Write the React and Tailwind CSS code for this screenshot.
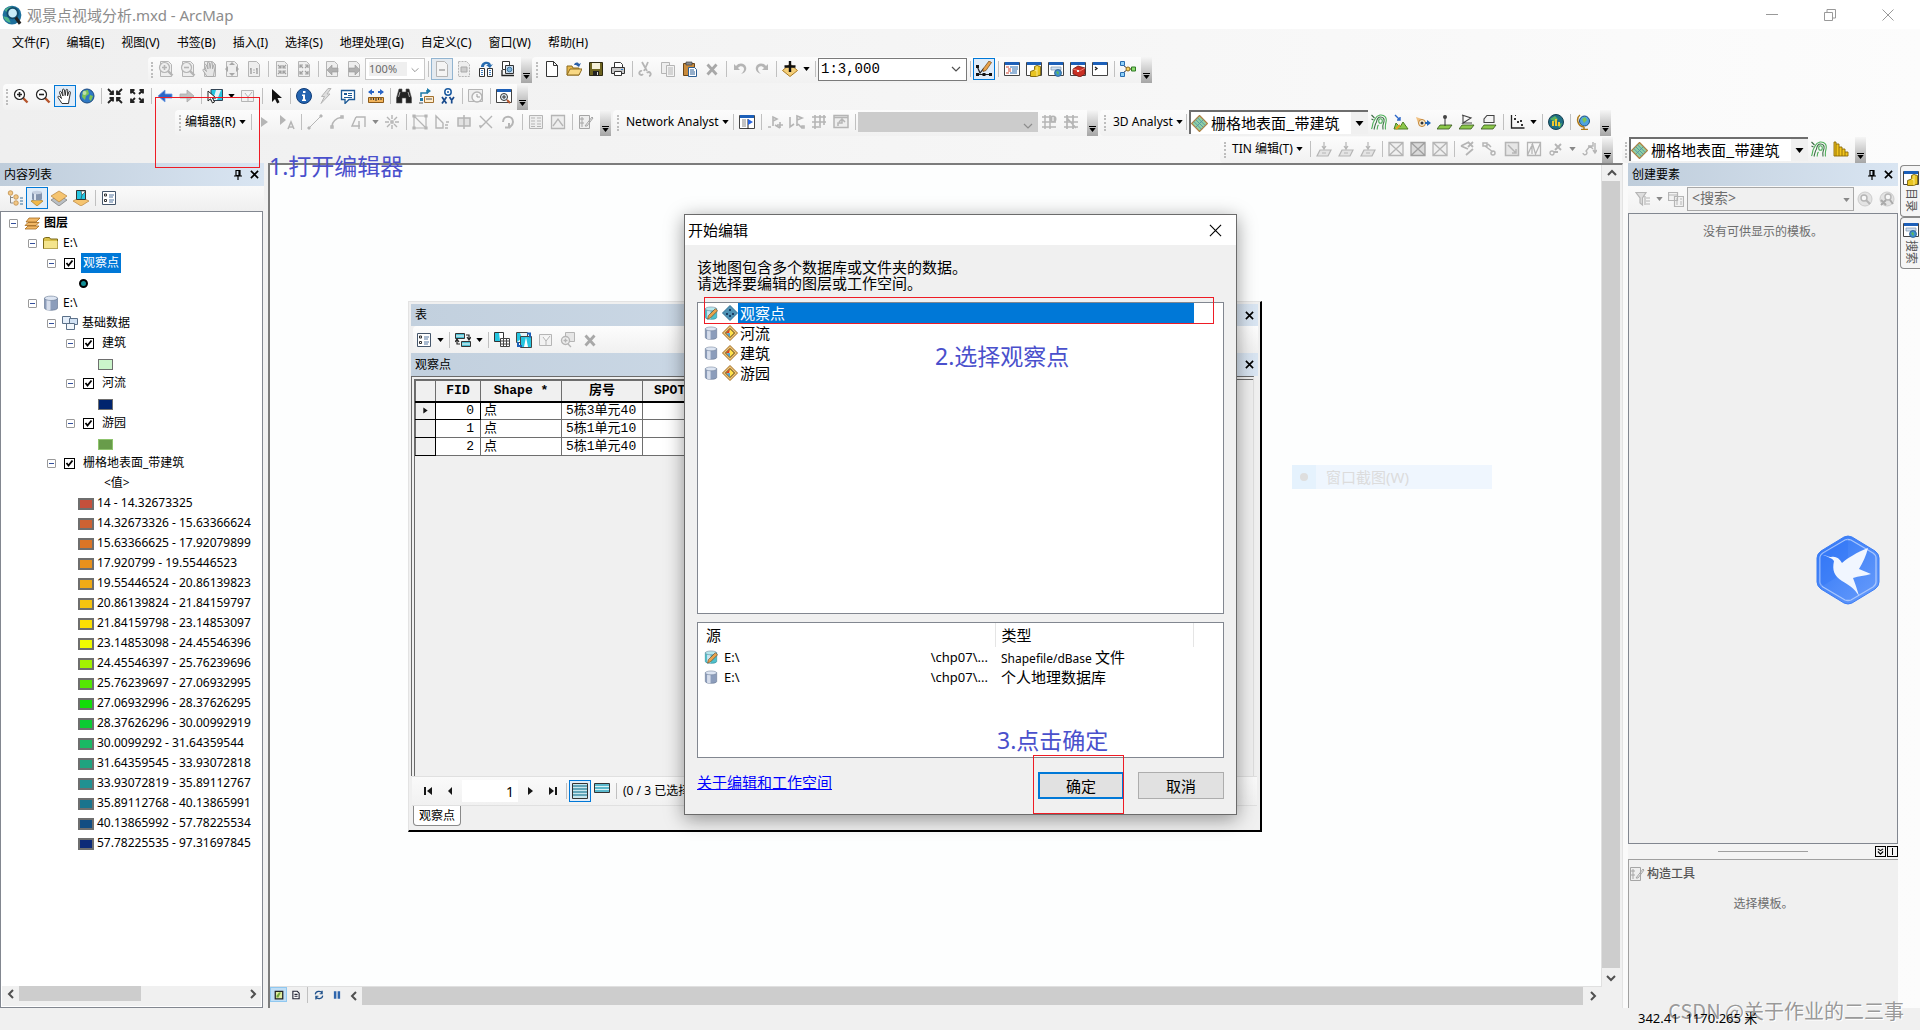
import { useState } from 'react';
import clsx from 'clsx';

const UI_FONT = "font-['Noto_Sans','Noto_Sans_CJK_SC',sans-serif]";
const SONG_FONT = "font-['Noto_Sans_CJK_SC',sans-serif]";
const MONO_FONT = "font-['Liberation_Mono','Noto_Sans_CJK_SC',monospace]";

const G = '#b5b5b5';
const page = 'M2.5.5h8l3 3v12h-11z';

// --- Shapes shared by several icons ---
const Win = ({ children }) => (
  <>
    <path d="M.5 1.5h15v13H.5z" fill="#fff" stroke="#444" />
    <path d="M1 1h14v3H1z" fill="#1c5fb8" />
    {children}
  </>
);
const Cylinder = ({ edit }) => (
  <>
    <path d="M1.5 3v10c0 3 13 3 13 0V3z" fill={edit ? '#4fc0cc' : '#8c9dbb'} stroke={edit ? '#2a8c98' : '#6b7c96'} strokeWidth=".7" />
    <path d="M3.500 5v9.700c1.500.5 2.500.5 4 .5V5z" fill="#e8eef8" opacity=".8" />
    <ellipse cx="8" cy="3.300" rx="6.500" ry="2.200" fill={edit ? '#b5e8ec' : '#dde5f2'} stroke="#6b7c96" strokeWidth=".6" />
    {edit && <path d="M4 15l1-4 8-8 2.500 2.500-8 8z" fill="#e9a24b" stroke="#5f4020" strokeWidth=".7" />}
  </>
);
const Diamond = ({ point }) => (
  <>
    <path d="M8 .5L15.500 8 8 15.500.5 8z" fill={point ? '#4f93b5' : '#f0c476'} stroke={point ? '#2f6f93' : '#a06a1c'} />
    {point ? (
      <path d="M7 4h2v2H7zM4 8h2v2H4zM10 8h2v2h-2zM7 10h2v2H7z" fill="#1c3f66" />
    ) : (
      <>
        <path d="M8 3.500L12.500 8 8 12.500 3.500 8z" fill="#ffe14a" stroke="#3b2a10" strokeWidth=".9" />
        <path d="M8 4L4 8l3 0z" fill="#e03c28" />
        <path d="M4.500 8.500L8 8v4z" fill="#4aa0e0" />
      </>
    )}
  </>
);
const Lens = ({ color = '#222', fill = '#fff', sign }) => (
  <>
    <path d="M10 10l4.500 4.500" stroke={color === G ? G : '#b5542c'} strokeWidth="2.400" />
    <circle cx="6.500" cy="6.500" r="5" fill={fill} stroke={color} strokeWidth="1.200" />
    <path d={sign === '+' ? 'M4 6.500h5M6.500 4v5' : 'M4 6.500h5'} stroke={color} strokeWidth="1.600" />
  </>
);
const Hand = ({ color = '#333', fill = '#fff' }) => (
  <path d="M5 15.500L1 9.500c-.5-1.200.8-1.800 1.700-.8L4.500 10.500 2.500 4.500c-.2-1.300 1.300-1.600 1.800-.5L6 8 5.500 2c0-1.200 1.600-1.300 1.900-.1L8.200 7.500 9 2c.3-1.100 1.700-.9 1.700.3L10.500 8l1.300-4c.5-1 1.900-.6 1.600.6L12 12l-.5 3.500z" fill={fill} stroke={color} />
);
const Contour = () => (
  <>
    <path d="M.5 15C2 12 1 10 3 7s1-5 6-6c5-.5 7 3 6 7-.5 2-1 4-.5 7.500" fill="none" stroke="#4fb05a" strokeWidth="1.100" />
    <path d="M3 15.500C4 12 4 10 5.500 8 6 5 7 3 9.500 3c3 0 4 2 3.500 4.500S11 11 12 15.500M.5 1l3 3M.5 5l2 1" fill="none" stroke="#3c6b45" strokeWidth="1.100" />
    <path d="M6 15.500c1-3 0-3 1.500-4.500" fill="none" stroke="#4fb05a" strokeWidth="1.100" />
    <ellipse cx="9.500" cy="7" rx="1.800" ry="2.300" fill="none" stroke="#4fb05a" strokeWidth="1.100" />
  </>
);
const Cat = () => (
  <Win>
    <path d="M4.500 15.500v-5l4-1.500V5.500L11 4.500l3.500 1v8.500l-4 1.500z" fill="#e8c422" stroke="#7a6208" strokeWidth=".9" />
    <path d="M8.500 9l2.500 1v5M11 5v5" fill="none" stroke="#fff2a0" strokeWidth=".8" />
  </Win>
);
const SearchWin = () => (
  <Win>
    <path d="M3 6h10v3H3z" fill="#cfe0f2" stroke="#7c93ad" strokeWidth=".7" />
    <circle cx="10" cy="12" r="3.500" fill="#3f8fd0" stroke="#1c4f80" strokeWidth=".7" />
    <path d="M8 11l2-1 1 2-1 2z" fill="#5cb85c" />
  </Win>
);
const ListPage = () => (
  <>
    <path d="M1.500 1.500h13v13h-13z" fill="#fff" stroke="#45566b" />
    <path d="M3.500 4h2v2h-2zM3.500 9.500h2v2h-2z" fill="none" stroke="#333" />
    <path d="M8 5h5M8 7h4M8 10h5M8 12h4" stroke="#5577a0" />
  </>
);
const MagBar = ({ d }) => <path d={d} fill="#161616" />;

const ICONS = {
  app: (
    <>
      <circle cx="8" cy="8" r="7.500" fill="#1d6f9c" />
      <path d="M2 4c3-3 6-3 8-2L8 5 4 6zM1 9l4 1 2 4c-3 0-5-2-6-5z" fill="#4fb58a" />
      <circle cx="8.500" cy="6.500" r="4.200" fill="#c9ecf7" stroke="#114a6b" strokeWidth="1.500" />
      <path d="M11 10l3.500 5" stroke="#222" strokeWidth="2.500" />
    </>
  ),
  pZoomIn: <><path d={page} fill="#eee" stroke={G} /><Lens color={G} fill="#eee" sign="+" /></>,
  pZoomOut: <><path d={page} fill="#eee" stroke={G} /><Lens color={G} fill="#eee" sign="-" /></>,
  pPan: <><path d={page} fill="#eee" stroke={G} /><Hand color="#aaa" fill="#e6e6e6" /></>,
  pFull: <><path d={page} fill="#eee" stroke={G} /><path d="M8 1l3 3H5zM8 15l3-3H5zM1 8l3-3v6zM15 8l-3-3v6z" fill="#a8a8a8" /></>,
  pOne: <><path d={page} fill="#eee" stroke={G} /><path d="M5 7v6M4 8h1M11 7v6M10 8h1M8 8.500v1M8 11v1" stroke="#a0a0a0" strokeWidth="1.400" /></>,
  pIn: <><path d={page} fill="#eee" stroke={G} /><path d="M4 7h3V4M9 4v3h3M4 10h3v3M12 10H9v3M4 4l3 3M12 4L9 7M4 13l3-3M12 13l-3-3" stroke="#a0a0a0" strokeWidth="1.200" fill="none" /></>,
  pOut: <><path d={page} fill="#eee" stroke={G} /><path d="M4 7V4h3M9 4h3v3M4 10v3h3M12 10v3H9M4 4l3 3M12 4L9 7M4 13l3-3M12 13l-3-3" stroke="#a0a0a0" strokeWidth="1.200" fill="none" /></>,
  pBack: <><path d={page} fill="#eee" stroke={G} /><path d="M3 9l5-5v3h6v4H8v3z" fill="#b0b0b0" stroke="#999" strokeWidth=".6" /></>,
  pFwd: <><path d={page} fill="#eee" stroke={G} /><path d="M14 9L9 4v3H3v4h6v3z" fill="#b0b0b0" stroke="#999" strokeWidth=".6" /></>,
  pDraft: <><path d={page} fill="#f4f4f4" stroke={G} /><path d="M5 9h6" stroke="#aaa" strokeWidth="1.600" /></>,
  pFocus: <><path d={page} fill="#eee" stroke={G} strokeDasharray="2 1" /><path d="M5 6h6v5H5z" fill="#ccc" stroke="#aaa" /></>,
  layoutSwap: (
    <>
      <path d="M3 6c0-6 9-7 10-2l2-1-3 4-4-3h2c-1-2-4-1-4 2z" fill="#2a6db0" />
      <path d="M1.500 7.500h5v8h-5zM9.500 7.500h5v8h-5z" fill="#fff" stroke="#333" />
      <path d="M3 9.500h2M3 11.500h2M3 13.500h2M11 9.500h2M11 11.500h2M11 13.500h2" stroke="#3f7fc0" />
    </>
  ),
  dataDriven: <><path d="M2.500.5h7v8h-7z" fill="#fff" stroke="#333" /><path d="M5.500 4.500h8v8h-8z" fill="#cde" stroke="#333" /><path d="M2 9v5.500h12" fill="none" stroke="#222" strokeWidth="1.300" /><circle cx="9.500" cy="8.500" r="2.300" fill="#7fb4dc" stroke="#2a5f8c" strokeWidth=".8" /></>,
  newDoc: <path d="M2.500.5h7l4 4v11h-11zM9.500.5v4h4" fill="#fff" stroke="#333" />,
  open: <><path d="M1 14V5h5l1 2h6v7z" fill="#e8b84b" stroke="#8c6a1c" /><path d="M1 14l3-6h12l-3 6z" fill="#f8d884" stroke="#8c6a1c" /><path d="M8 4c1-3 4-3 5-1l2-1-2 4-3-2h2" fill="#2a5fa8" /></>,
  save: <><path d="M1.500 1.500h13v13h-13z" fill="#6e6420" stroke="#2e2a10" /><path d="M4 2h8v6H4z" fill="#f5f0d8" /><path d="M5 10h6v5H5z" fill="#222" /><path d="M9 11h1v3H9z" fill="#ddd" /></>,
  print: <><path d="M4.500 6V1.500h6l2 2V6" fill="#fff" stroke="#333" /><path d="M1.500 6.500h13v6h-13z" fill="#c9c9c9" stroke="#333" /><path d="M4.500 10.500h7v4h-7z" fill="#fff" stroke="#333" /><path d="M11 8h2v1h-2z" fill="#2c7fd0" /></>,
  cut: <path d="M4 1l5 9M10 1L6 10M5 13a2 2 0 1 1-1-3M11 15a2 2 0 1 0-2-3" fill="none" stroke={G} strokeWidth="1.800" />,
  copy: <><path d="M1.500 1.500h8v11h-8z" fill="#eee" stroke={G} /><path d="M6.500 4.500h8v11h-8z" fill="#f3f3f3" stroke={G} /><path d="M8 7h5M8 9h5M8 11h5M8 13h5" stroke={G} /></>,
  paste: <><path d="M1.500 2.500h11v12h-11z" fill="#c98b3c" stroke="#6b4618" /><path d="M4 1h6v3H4z" fill="#888" stroke="#444" strokeWidth=".7" /><path d="M6.500 6.500h6l2 2v7h-8z" fill="#fff" stroke="#2d5f94" /><path d="M8 9h4M8 11h5M8 13h5" stroke="#2d5f94" /></>,
  del: <path d="M3.500 3.500l9 10M12.500 3.500l-9 10" stroke="#a8a8a8" strokeWidth="2.800" />,
  undo: <path d="M2 3v6h6L6 7c2-3 6-2 6 1 0 2-1 3-3 5 4-1 6-4 5-7-1-4-7-5-10-1z" fill={G} />,
  redo: <path d="M14 3v6H8l2-2C8 4 4 5 4 8c0 2 1 3 3 5-4-1-6-4-5-7 1-4 7-5 10-1z" fill={G} />,
  addData: <><path d="M8 3l7.500 6.500L8 15.500.5 9.500z" fill="#f5cf78" stroke="#a97a24" /><path d="M8 0v11M2.500 5.500h11" stroke="#111" strokeWidth="2.400" /></>,
  sketch: <><path d="M1 5l3 7 4-5M2 13.500h12" fill="none" stroke="#222" strokeWidth="1.200" /><path d="M7 8l6-8 2.500 1.500-5.500 8-3 1z" fill="#e9a24b" stroke="#6b4618" strokeWidth=".7" /><path d="M0 4h3v3H0zM0 12h3v3H0zM6.500 12h3v3h-3zM13 12h3v3h-3z" fill="#111" /></>,
  winToc: <Win><path d="M2 6h3M4 8h3M4 10h3M2 12h3" stroke="#d0402c" /><path d="M6 6h8M8 8h6M8 10h5M6 12h7" stroke="#2a6db0" /></Win>,
  winCat: <Cat />,
  winSearch: <SearchWin />,
  winTool: <Win><path d="M3 8l5-3 7 2v6l-5 3-7-3z" fill="#c92f24" stroke="#6b1510" strokeWidth=".8" /><path d="M3 8l7 2 5-3" fill="none" stroke="#f08070" /><path d="M7 9h2v2H7z" fill="#eee" /></Win>,
  winPy: <Win><path d="M3 6l2 1.500L3 9" fill="none" stroke="#222" strokeWidth="1.300" /></Win>,
  model: <><path d="M3 4l5 4M3 12l5-4M9 8h4" stroke="#333" /><path d="M.5.500h4v4h-4zM.5 11.500h4v4h-4z" fill="#8ed0f8" stroke="#2a6db0" /><circle cx="8" cy="8" r="2" fill="#f5d060" stroke="#8c6a1c" /><path d="M11.500 6h4v4h-4z" fill="#8fdc70" stroke="#2f7a24" /></>,
  zoomIn: <Lens sign="+" />,
  zoomOut: <Lens sign="-" />,
  pan: <Hand />,
  globe: <><circle cx="8" cy="8" r="7" fill="#2f79c4" stroke="#1b4a80" /><path d="M4 3l5-1 1 4-3 2-1 4-3-3zM11 7l3 1-2 5-2-2z" fill="#7cc455" /><circle cx="5.500" cy="5" r="2" fill="#fff" opacity=".5" /></>,
  fixIn: <path d="M1 1l5 5M6 2.500V6H2.500M15 1l-5 5M10 2.500V6h3.500M1 15l5-5M2.500 10H6v3.500M15 15l-5-5M13.500 10H10v3.500" fill="none" stroke="#222" strokeWidth="1.800" />,
  fixOut: <path d="M2 2l4 4M2 5.500V2h3.500M14 2l-4 4M10.500 2H14v3.500M2 14l4-4M2 10.500V14h3.500M14 14l-4-4M14 10.500V14h-3.500" fill="none" stroke="#222" strokeWidth="1.800" />,
  back: <path d="M1 8l7-6v4h7v4H8v4z" fill="#2a66c8" stroke="#6c9be0" strokeWidth=".8" />,
  fwd: <path d="M15 8L8 2v4H1v4h7v4z" fill="#c0c0c0" stroke="#aaa" strokeWidth=".8" />,
  selFeat: <><path d="M4 1.500h11.500v11H4z" fill="#25c5e0" stroke="#345" /><path d="M9 2l-3 10h4l4-10z" fill="#e6f4f8" /><path d="M1 3v10l2.500-2.200L5.500 15l2-1-2-4H9z" fill="#fff" stroke="#222" /></>,
  clearSel: <path d="M1.500 2.500h12v11h-12zM5 5l3 4 4-5M8 9v4" fill="#f2f2f2" stroke={G} />,
  pointer: <path d="M4 1v13l3-3 2.200 4.500 2.300-1.200L9.500 10H14z" fill="#111" />,
  info: <><circle cx="8" cy="8" r="7.500" fill="#2464b0" stroke="#0f3c78" /><path d="M7 3h2.500v2H7zM6 6.500h3v5h1V13H6v-1.500h1V8H6z" fill="#fff" /></>,
  bolt: <path d="M10 .5L3.500 8.500h3L3 15.500l9-9.500H9l4-5.500z" fill="#dedede" stroke={G} />,
  popup: <><path d="M1.500 2.500h13v9H9l-4 4v-4H1.500z" fill="#fff" stroke="#1d5a96" strokeWidth="1.300" /><path d="M4 5h3v2H4zM8 5h4v1H8zM8 7h4v1H8zM4 9h8v1H4z" fill="#1d5a96" /></>,
  measure: <><path d="M1 4h5M10 4h5" stroke="#2a66c8" strokeWidth="2" /><path d="M4 1L0 4l4 3zM12 1l4 3-4 3z" fill="#2a66c8" /><path d="M.5 9.500h15v5H.5z" fill="#f2b45c" stroke="#8c5a18" /><path d="M3 10v2M5.500 10v2M8 10v3M10.500 10v2M13 10v2" stroke="#333" /></>,
  find: <><path d="M3 1h3v3h4V1h3l2.500 9v5H10v-5H6v5H.5v-5z" fill="#222" stroke="#555" strokeWidth=".6" /><path d="M4 4L2.500 9M12 4l1.500 5" stroke="#aaa" /></>,
  route: <><path d="M3 9V5h6V2" fill="none" stroke="#1d7aa8" strokeWidth="1.500" /><path d="M9 0l4 3-4 3zM2 10h3v3H2z" fill="#1d7aa8" /><path d="M6.500 8.500h9v6h-9z" fill="#ffeccc" stroke="#a07030" /><path d="M8 11h6M1 15h4" stroke="#555" /></>,
  goXY: <><circle cx="8" cy="4" r="3.200" fill="#fff" stroke="#1a5aa0" strokeWidth="1.500" /><circle cx="8" cy="4" r="1" fill="#1a5aa0" /><path d="M2 9l4.500 6.500M6.500 9L2 15.500M9.500 9l2.200 3.200L14 9M11.700 12v3.500" fill="none" stroke="#17498c" strokeWidth="1.700" /></>,
  time: <><path d="M.5 1.500h14v12H.5z" fill="#eee" stroke={G} /><circle cx="9" cy="9" r="5" fill="#f7f7f7" stroke={G} strokeWidth="1.400" /><path d="M9 6v3h3" fill="none" stroke="#999" /></>,
  viewer: <Win><circle cx="8" cy="9" r="3.500" fill="#e0eefa" stroke="#333" /><path d="M6 9h4M8 7v4" stroke="#333" /><path d="M11 12l3 3" stroke="#b5542c" strokeWidth="2" /></Win>,
  eArrow: <path d="M4 3v10l7-5z" fill={G} />,
  eArrowA: <><path d="M1 1v10l6-5z" fill={G} /><path d="M9 15l3-7 3 7M10 13h4" fill="none" stroke={G} strokeWidth="1.500" /></>,
  eLine: <path d="M3 13L13 3M1 13h2v2H1zM13 1h2v2h-2z" fill={G} stroke={G} />,
  eArc: <path d="M3 12C3 8 7 4 12 3.500M2 12h2v2H2zM12 2h2v2h-2z" fill="none" stroke={G} strokeWidth="1.500" />,
  ePoly: <path d="M5 3h9v10M5 3L1 12h8M8 15V7" fill="none" stroke={G} strokeWidth="1.400" />,
  ePoint: <path d="M8 1v4M8 11v4M1 8h4M11 8h4M3 3l3 3M13 3l-3 3M3 13l3-3M13 13l-3-3M7 7h2v2H7z" fill="none" stroke={G} strokeWidth="1.400" />,
  eReshape: <path d="M2 2h12v12H2zM2 2l12 12M1 1h2v2H1zM13 1h2v2h-2zM1 13h2v2H1zM13 13h2v2h-2z" fill="none" stroke={G} strokeWidth="1.200" />,
  eSplit: <path d="M2 2v12h7V9zM2 2l7 7M11 11h3M11 14h3M12 8h3" fill="none" stroke={G} strokeWidth="1.400" />,
  eCut: <path d="M2 4h12v8H2zM8 1v14" fill="#e2e2e2" stroke={G} strokeWidth="1.500" />,
  eCross: <path d="M2 2l12 12M14 2L2 14M1 12h3" fill="none" stroke={G} strokeWidth="1.400" />,
  eRotate: <path d="M3 8c0-7 10-7 10 0 0 3-2 4-4 6M5 13.500h5M9 9v5" fill="none" stroke={G} strokeWidth="2" />,
  eAttr: <path d="M1.500 1.500h13v13h-13zM3 4h4M9 4h4M3 7h4M9 7h4M3 10h4M9 10h4M3 12.500h4M9 12.500h4" fill="#eee" stroke={G} />,
  eSketchP: <path d="M1.500 1.500h13v13h-13zM3 12l5-7 5 7" fill="#eee" stroke={G} strokeWidth="1.300" />,
  eCreate: <path d="M1.500 1.500h10v13h-10zM3 4h2v2H3zM3 8h2v2H3zM3 12h2M7 12l7-9 1 1-6 8z" fill="#eee" stroke="#a5a5a5" />,
  naWin: <Win><path d="M3 6h4M3 8h4M3 10h4M3 12h4" stroke="#888" /><path d="M9 5v10" stroke="#222" /><path d="M9 5l5 3-5 3z" fill="#2a66e0" /></Win>,
  naAdd: <path d="M1 13h3M6 12V3l4 2-4 2M8 11l5 3M13 8v6M10 11h6" fill="none" stroke={G} strokeWidth="1.600" />,
  naSel: <path d="M1 3v10l4-3M8 12V2l5 2-5 2M9 10l4 4M13 12h2v2h-2z" fill="none" stroke={G} strokeWidth="1.600" />,
  naGrid: <path d="M1 3h14M1 8h14M1 13h9M4 1v14M9 1v11M13 1v10" fill="none" stroke={G} strokeWidth="1.600" />,
  naDir: <path d="M1 1.500h14v12H1zM1 3.500h14M5 12V9h4V6M6 8l3-3 3 3" fill="#eee" stroke={G} strokeWidth="1.500" />,
  naInfo: <><path d="M1 3h9M1 8h14M1 13h14M4 1v14M9 1v14" stroke={G} strokeWidth="1.500" /><circle cx="12" cy="5" r="3.500" fill={G} /><path d="M12 3v4" stroke="#fff" /></>,
  naTool: <path d="M1 3h14M1 8h14M1 13h14M4 1v14M10 1v14M4 4l9 10" fill="none" stroke={G} strokeWidth="1.700" />,
  contour: <Contour />,
  steep: <><path d="M2 1l5 5M7 3v3H4" fill="none" stroke="#2a66c8" strokeWidth="1.400" /><path d="M1 15l2-6 4 4 3-5 5 7z" fill="#8cc84b" stroke="#4e7f22" /><path d="M3 15l4-4" stroke="#e8a020" strokeWidth="2" /></>,
  sight: <><path d="M1 3l6 2-4 4z" fill="#f0c080" /><circle cx="7" cy="9" r="3.500" fill="#f8ecd0" stroke="#c08030" /><circle cx="7" cy="9" r="1.500" fill="#333" /><path d="M10 9h3" stroke="#2266b8" strokeWidth="2" /><path d="M12 6l4 3-4 3z" fill="#2266b8" /></>,
  iPoint: <><path d="M3 11h12l-3 4H0z" fill="#8cc84b" stroke="#33531a" strokeWidth=".8" /><path d="M8 3v9" stroke="#333" /><circle cx="8" cy="3" r="2" fill="#444" /></>,
  iLine: <><path d="M3 11h12l-3 4H0z" fill="#8cc84b" stroke="#33531a" strokeWidth=".8" /><path d="M3 1l9 3-8 5 9 0M4 1v9" fill="none" stroke="#444" strokeWidth="1.100" /></>,
  iPoly: <><path d="M3 11h12l-3 4H0z" fill="#8cc84b" stroke="#33531a" strokeWidth=".8" /><path d="M6 1.500h7v7H3V5z" fill="#f5f5f5" stroke="#444" strokeWidth="1.100" /></>,
  profile: <><path d="M2.500 1v13h13" fill="none" stroke="#222" strokeWidth="1.300" /><path d="M5 4h2v2H5zM8 7h2v2H8zM11 6h2v2h-2zM12 10h2v2h-2zM6 1h1v1H6z" fill="#333" /></>,
  scene: <><circle cx="8" cy="8" r="7.500" fill="#1f6f86" stroke="#153f50" /><path d="M2 5l5-3 3 3-3 3zM9 11l5-2-2 5z" fill="#57b060" /><path d="M4 7h2v5H4zM7 5h2v7H7zM10 8h2v4h-2z" fill="#f0c830" /></>,
  arcGlobe: <><circle cx="8.500" cy="7" r="5" fill="#4ea3e0" stroke="#1c4f80" /><path d="M6 5l3-2 2 3-3 3z" fill="#7cc455" /><path d="M4 1C0 4 1 12 8 13M5 15.500h7M8 13v2" fill="none" stroke="#b07a18" strokeWidth="1.500" /></>,
  tin: <path d="M4 9h11l-3 6H1zM6 12h4M8 1v6M6 5l2 3 2-3" fill="#e4e4e4" stroke={G} strokeWidth="1.200" />,
  tinBox: <path d="M1 1.500h14v13H1zM1 1.500l14 13M15 1.500l-14 13" fill="#f0f0f0" stroke={G} strokeWidth="1.300" />,
  tinBoxD: <path d="M1 1.500h14v13H1zM1 1.500l14 13M15 1.500l-14 13" fill="#dadada" stroke="#a0a0a0" strokeWidth="1.300" />,
  tinDel: <path d="M1 5l8-4M1 5l7 3M8 1l5 5M13 1L8 6M13 8l-7 6" fill="none" stroke={G} strokeWidth="1.800" />,
  tinMove: <path d="M1 2h4v3H1zM3 5l8 6M6 3l3 3M11 10a2 2 0 1 1 0 4 2 2 0 0 1 0-4z" fill="none" stroke={G} strokeWidth="1.500" />,
  tinSwap: <path d="M1.500 1.500h13v13h-13zM4 4l8 8M8 12h4V8" fill="#e6e6e6" stroke={G} strokeWidth="1.500" />,
  tinMod: <path d="M1.500 1.500h13v13h-13zM1.500 14l5-11 3 10 5-11M6 3v10" fill="none" stroke={G} strokeWidth="1.300" />,
  tinX: <><circle cx="4" cy="12" r="2" fill="none" stroke={G} strokeWidth="1.300" /><path d="M7 3l6 6M13 3L7 9M6 11h4" stroke={G} strokeWidth="1.900" /></>,
  tinNode: <path d="M2 12a2 2 0 1 0 3-2L9 5l3 3M7 5h5V1M14 2v9M12 9l2 3 2-3" fill="none" stroke={G} strokeWidth="1.400" />,
  hist: <path d="M1 15V1h2v2h3v3h3v2h3v3h3v4zM3 3v12M6 6v9M9 8v7M12 11v4" fill="#f2c51c" stroke="#8a6a08" strokeWidth=".9" />,
  surface: <><path d="M8 .5L15.500 8 8 15.500.5 8z" fill="#8fd0a4" stroke="#b08040" strokeWidth="1.200" /><path d="M4.200 4.200l7.500 7.500M8 8l3.700-3.700M8 8l-3.700 3.700M6 2.500l7.500 7.500M2.500 6l7.500 7.500" stroke="#4f8fa8" strokeWidth=".8" /></>,
  tocOrder: <><circle cx="3.500" cy="3" r="2.300" fill="#f2c786" stroke="#b7843c" strokeWidth=".7" /><circle cx="9" cy="7" r="2.300" fill="#f2c786" stroke="#b7843c" strokeWidth=".7" /><circle cx="9" cy="13" r="2.300" fill="#f2c786" stroke="#b7843c" strokeWidth=".7" /><path d="M3.500 6v7H6M3.500 7.500H6" fill="none" stroke="#888" /><path d="M13 8h3M13 11h3M13 14h3" stroke="#356f9c" /></>,
  tocSource: <><path d="M2 11l6-2 6 2-6 5z" fill="#f0b84a" stroke="#a97a24" strokeWidth=".7" /><path d="M3 2v7c0 2 10 2 10 0V2z" fill="#8494ad" /><path d="M5 3v7h2V3z" fill="#dde5f0" /><ellipse cx="8" cy="2.500" rx="5" ry="1.700" fill="#c5d0e0" /></>,
  tocVis: <><path d="M8 5l8 5-8 6-8-6z" fill="#b9bfc4" stroke="#777" strokeWidth=".7" /><path d="M8 1l8 5-8 6-8-6z" fill="#f5c470" stroke="#b7843c" strokeWidth=".7" /></>,
  tocSel: <><path d="M0 11l8-4 8 4-8 5z" fill="#f5c470" stroke="#b7843c" strokeWidth=".7" /><path d="M3.500.5h9v9h-9z" fill="#25c5e0" stroke="#333" /><path d="M8 1l1 4 3-3V1zM8 9l1-4" fill="#fff" stroke="#333" strokeWidth=".6" /></>,
  list: <ListPage />,
  layers: <><path d="M1 14l3-3h11l-3 3zM1 10.500l3-3h11l-3 3zM2 7l3-4h11l-4 4z" fill="#f2b866" stroke="#a3691e" strokeWidth=".8" /></>,
  folder: <><path d="M.5 13.500v-10l2-1h4l1 1.500h7v9.500z" fill="#d9c04a" stroke="#7c6a18" /><path d="M1 6h13.500v7.500H1z" fill="#f4e48c" /></>,
  db: <Cylinder />,
  dbEdit: <Cylinder edit />,
  dataset: <><path d="M.5 1.500h8v7h-8z" fill="#e4eefa" stroke="#5b7089" /><path d="M7.500 3.500h8v6h-8z" fill="#d2e2f4" stroke="#5b7089" /><path d="M4.500 8.500h8v6h-8z" fill="#f2f7fc" stroke="#5b7089" /></>,
  ptLayer: <Diamond point />,
  polyLayer: <Diamond />,
  related: <><path d="M.5 1.500h9v5h-9zM6.500 9.500h9v5h-9z" fill="#49bcd0" stroke="#333" /><path d="M1 4h8M7 12h8" stroke="#fff" /><path d="M11 3h3v4M5 12H2V8M12 5l2 3 2-3M0 10l2-3 2 3" fill="none" stroke="#222" strokeWidth="1.200" /></>,
  selAttr: <><path d="M.5.5h9v9h-9z" fill="#25c5e0" stroke="#333" /><path d="M5 1l1 8h3V1z" fill="#fff" /><path d="M6.500 6.500h9v8h-9zM6.500 9h9M6.500 12h9M9.500 7v8M12.500 7v8" fill="#fff" stroke="#444" /></>,
  selSwitch: <><path d="M.5.5h11v10H.5z" fill="#e8f4f8" stroke="#444" /><path d="M1 1h3l2 5-5 4z" fill="#25c5e0" /><path d="M4.500 4.500h11v11h-11z" fill="#25c5e0" stroke="#444" /><path d="M10 5l2 10H8z" fill="#fff" /><path d="M11 1.500h3v4M2 10v4h4" fill="none" stroke="#1c5fb8" strokeWidth="2" /></>,
  zoomSel: <><path d="M5.500.5h9v9h-9z" fill="#e6e6e6" stroke={G} /><circle cx="5.500" cy="8.500" r="4" fill="#f0f0f0" stroke={G} strokeWidth="1.400" /><path d="M3.500 8.500h4M5.500 6.500v4M8 12l3 3" stroke={G} strokeWidth="1.400" /></>,
  allRecs: <><path d="M.5.5h15v15H.5z" fill="#c8e6ee" stroke="#333" /><path d="M1 3h14M1 6h14M1 9h14M1 12h14" stroke="#3f8fa6" strokeWidth="1.400" /></>,
  selRecs: <><path d="M.5.5h15v9H.5z" fill="#5bb8cc" stroke="#333" /><path d="M1 3.500h14M1 6.500h14" stroke="#d8f2f6" /></>,
  first: <MagBar d="M4 4h2v8H4zM12 4v8L7 8z" />,
  prev: <MagBar d="M10 4v8L6 8z" />,
  next: <MagBar d="M6 4v8l5-4z" />,
  last: <MagBar d="M11 4h2v8h-2zM5 4v8l5-4z" />,
  rowMark: <MagBar d="M3 1v14l10-7z" />,
  filter: <path d="M1 1.500h10L7.500 7v7L5 12V7zM11 7h4M11 10h4M11 13h4M10 5v9" fill="#ddd" stroke={G} strokeWidth="1.200" />,
  organize: <path d="M.5 1.500h9v8h-9zM.5 4h9M6.500 5.500h9v10h-9zM8 8h2M12 8h2M8 11h2M12 11h2M8 13h2M12 13h2" fill="#f2f2f2" stroke={G} strokeWidth="1.200" />,
  searchGo: <><circle cx="8" cy="8" r="7" fill="#e3e3e3" stroke="#ccc" /><circle cx="7" cy="7" r="3" fill="#f7f7f7" stroke={G} strokeWidth="1.400" /><path d="M9 9l4 4" stroke={G} strokeWidth="2" /></>,
  searchClr: <><circle cx="8" cy="8" r="7" fill="#e3e3e3" stroke="#ccc" /><circle cx="9" cy="6" r="3" fill="#f7f7f7" stroke={G} strokeWidth="1.400" /><path d="M11 9l3 4M2 9l5 5M7 9l-5 5" stroke="#aaa" strokeWidth="2" /></>,
  tabData: <><path d="M2 2h12v12H2z" fill="#dfeaa0" stroke="#222" strokeWidth="2" /><path d="M4 12V9l4-5h3l-4 8z" fill="#6fa53a" /></>,
  tabLayout: <path d="M3 2h7l3 3v9H3zM5.500 7h5M5.500 10h5" fill="#fff" stroke="#223" strokeWidth="1.800" />,
  refresh: <path d="M2 7c1-6 9-6 11-2M14 9c-1 6-9 6-11 2M13 1v5H9M3 15v-5h4" fill="none" stroke="#1d4f8a" strokeWidth="1.900" />,
  pause: <path d="M3 2h4v12H3zM9 2h4v12H9z" fill="#2f66ad" />,
};

const Icon = ({ name, className = 'size-4' }) => (
  <svg viewBox="0 0 16 16" fill="none" aria-hidden="true" className={clsx('shrink-0', className)}>{ICONS[name]}</svg>
);

const Caret = ({ gray, className }) => (
  <svg viewBox="0 0 8 5" aria-hidden="true" className={clsx('shrink-0', className || 'w-[7px] h-1')}>
    <path d="M0 0h8L4 5z" fill={gray ? '#888' : '#000'} />
  </svg>
);

const Chevron = ({ dir, thin, className = 'size-3' }) => {
  const paths = { up: 'M2 8l4-4 4 4', down: 'M2 4l4 4 4-4', left: 'M8 2L4 6l4 4', right: 'M4 2l4 4-4 4' };
  return (
    <svg viewBox="0 0 12 12" aria-hidden="true" className={clsx('shrink-0', className)}>
      <path d={paths[dir]} fill="none" stroke="#505050" strokeWidth={thin ? 1.2 : 2} />
    </svg>
  );
};

const CloseX = ({ className = 'size-[9px]' }) => (
  <svg viewBox="0 0 10 10" aria-hidden="true" className={className}><path d="M1 1l8 8M9 1L1 9" stroke="#000" strokeWidth="1.800" /></svg>
);
const Pin = () => (
  <svg viewBox="0 0 8 10" aria-hidden="true" className="w-2 h-2.5"><path d="M2 .5h4v5H2zM5 .5v5M0 6h8M4 6v4" fill="none" stroke="#000" strokeWidth="1.200" /></svg>
);

// --- Toolbar pieces ---
const ToolButton = ({ name, active, caret, gray }) => (
  <button
    aria-label={name}
    className={clsx('h-[22px] flex items-center shrink-0', caret ? 'w-[33px] pl-[3px] gap-[5px]' : 'w-[22px] justify-center',
      active === 'blue' && 'border border-[#0078d7] bg-[#e0ecf8]',
      active === 'gray' && 'border border-[#92b4d0] bg-[#e4eaf0]')}
  >
    <Icon name={name} />
    {caret && <Caret gray={gray} />}
  </button>
);

const Sep = () => <span className="w-1.5 shrink-0 flex justify-center"><span className="w-px h-4 bg-[#c0c0c0]" /></span>;

const MenuButton = ({ children, className }) => (
  <button className={clsx('h-[22px] flex items-center gap-[3px] whitespace-nowrap shrink-0', className)}>
    {children}<Caret />
  </button>
);

const Toolbar = ({ items, className, grip = 'w-[7px]' }) => (
  <div role="toolbar" className={clsx('h-[26px] flex shrink-0 rounded-l bg-linear-to-b from-[#fcfcfc] to-[#f1f1f1]', className)}>
    <span className={clsx('shrink-0 flex items-center justify-center', grip)}>
      <span className="h-4 border-l-2 border-dotted border-[#bdbdbd]" />
    </span>
    <div className="flex items-center h-6">
      {items.map((it, i) => {
        if (it === '|') return <Sep key={i} />;
        if (typeof it === 'string') return <ToolButton key={i} name={it} />;
        if (it.name) return <ToolButton key={i} {...it} />;
        return <div key={i} className="flex shrink-0">{it.node}</div>;
      })}
    </div>
    <button aria-label="toolbar options" className="ml-auto w-[11px] flex flex-col items-center justify-end gap-px pb-1 bg-linear-to-b from-[#f6f6f6] to-[#a6a6a6]">
      <span className="w-[7px] h-px bg-black" />
      <Caret className="w-[7px] h-1" />
    </button>
  </div>
);

const SurfaceCombo = ({ label }) => (
  <div className="relative w-[179px] h-6 flex items-center border-t-2 border-l-2 border-[#6e6e6e] bg-white">
    <Icon name="surface" className="size-[17px]" />
    <select aria-label={label} className={clsx('appearance-none w-full pl-[3px] text-[15px] leading-5 text-black outline-none', SONG_FONT)}>
      <option>栅格地表面_带建筑</option>
    </select>
    <span className="pointer-events-none absolute right-0 inset-y-0 w-[17px] bg-[#f0f0f0] flex items-center justify-center">
      <Caret className="w-[9px] h-[5px]" />
    </span>
  </div>
);

const layoutTools = [
  'pZoomIn', 'pZoomOut', 'pPan', 'pFull', 'pOne', '|', 'pIn', 'pOut', '|', 'pBack', 'pFwd',
  { node: (
    <div className="relative w-[60px] h-[22px] border border-[#c8c8c8] bg-white p-[3px]">
      <select disabled aria-label="zoom" className="appearance-none block w-[38px] h-[14px] bg-[#efefef] text-[11px] leading-[14px] text-[#6a6a6a]"><option>100%</option></select>
      <Chevron dir="down" thin className="pointer-events-none absolute right-1 top-1.5 size-2.5 opacity-60" />
    </div>
  ) },
  '|', { name: 'pDraft', active: 'gray' }, 'pFocus', 'layoutSwap', 'dataDriven',
];

const standardTools = [
  'newDoc', 'open', 'save', 'print', '|', 'cut', 'copy', 'paste', 'del', '|', 'undo', 'redo', '|',
  { name: 'addData', caret: true }, '|',
  { node: (
    <div className="relative w-[149px] h-[23px] border border-[#7a7a7a] bg-white">
      <select aria-label="scale" className={clsx('appearance-none w-full h-full pl-0.5 text-[14px] leading-5', MONO_FONT)}><option>1:3,000</option></select>
      <Chevron dir="down" thin className="pointer-events-none absolute right-1 top-1 size-3" />
    </div>
  ) },
  '|', { name: 'sketch', active: 'blue' }, '|', 'winToc', 'winCat', 'winSearch', 'winTool', 'winPy', '|', 'model',
];

const navTools = [
  'zoomIn', 'zoomOut', { name: 'pan', active: 'blue' }, 'globe', '|', 'fixIn', 'fixOut', '|', 'back', 'fwd', '|',
  { name: 'selFeat', caret: true }, 'clearSel', '|', 'pointer', '|', 'info', 'bolt', 'popup', '|', 'measure', '|',
  'find', 'route', 'goXY', '|', 'time', '|', 'viewer',
];

const editorTools = [
  { node: <MenuButton className="w-16 pl-px">编辑器(R)</MenuButton> },
  '|', 'eArrow', 'eArrowA', '|', 'eLine', 'eArc', { name: 'ePoly', caret: true, gray: true }, 'ePoint', '|',
  'eReshape', 'eSplit', 'eCut', 'eCross', 'eRotate', '|', 'eAttr', 'eSketchP', '|', 'eCreate',
];

const networkTools = [
  { node: <MenuButton className="w-[108px] pl-1">Network Analyst</MenuButton> },
  '|', 'naWin', '|', 'naAdd', 'naSel', 'naGrid', 'naDir', '|',
  { node: (
    <div className="relative w-[180px] h-5 bg-[#cccccc]">
      <select disabled aria-label="network dataset" className="appearance-none w-full h-full"><option /></select>
      <Chevron dir="down" thin className="pointer-events-none absolute right-1 bottom-0 size-3 opacity-50" />
    </div>
  ) },
  'naInfo', 'naTool',
];

const analystTools = [
  { node: <MenuButton className="w-[74px] pl-1">3D Analyst</MenuButton> }, '|', { node: <SurfaceCombo label="3D surface" /> },
  'contour', 'steep', 'sight', 'iPoint', 'iLine', 'iPoly', '|', { name: 'profile', caret: true }, '|', 'scene', '|', 'arcGlobe',
];

const tinTools = [
  { node: <MenuButton className="w-[78px] pl-[3px]">TIN 编辑(T)</MenuButton> }, '|', 'tin', 'tin', 'tin', '|', 'tinBox', 'tinBoxD', 'tinBox', '|',
  'tinDel', 'tinMove', 'tinSwap', 'tinMod', { name: 'tinX', caret: true, gray: true }, 'tinNode',
];

const menus = ['文件(F)', '编辑(E)', '视图(V)', '书签(B)', '插入(I)', '选择(S)', '地理处理(G)', '自定义(C)', '窗口(W)', '帮助(H)'];

// --- Table of contents data ---
const tree = [
  { level: 0, icon: 'layers', text: '图层', bold: true },
  { level: 1, icon: 'folder', text: 'E:\\' },
  { level: 2, check: true, text: '观察点', selected: true },
  { symbol: 'point' },
  { level: 1, icon: 'db', text: 'E:\\' },
  { level: 2, icon: 'dataset', text: '基础数据' },
  { level: 3, check: true, text: '建筑' },
  { symbol: 'bg-[#cbf5cb] border-[#6e6e6e]' },
  { level: 3, check: true, text: '河流' },
  { symbol: 'bg-[#00246e] border-[#6e6e6e]' },
  { level: 3, check: true, text: '游园' },
  { symbol: 'bg-[#689c4a] border-[#8fc46e]' },
  { level: 2, check: true, text: '栅格地表面_带建筑' },
];

const legend = [
  ['14 - 14.32673325', '#c4503c'],
  ['14.32673326 - 15.63366624', '#cd6233'],
  ['15.63366625 - 17.92079899', '#db7526'],
  ['17.920799 - 19.55446523', '#e8911b'],
  ['19.55446524 - 20.86139823', '#f0ab16'],
  ['20.86139824 - 21.84159797', '#f6c40f'],
  ['21.84159798 - 23.14853097', '#fbe003'],
  ['23.14853098 - 24.45546396', '#f0fb00'],
  ['24.45546397 - 25.76239696', '#a3f200'],
  ['25.76239697 - 27.06932995', '#55e602'],
  ['27.06932996 - 28.37626295', '#12dd09'],
  ['28.37626296 - 30.00992919', '#0bcb33'],
  ['30.0099292 - 31.64359544', '#1ab964'],
  ['31.64359545 - 33.93072818', '#1fa37f'],
  ['33.93072819 - 35.89112767', '#209191'],
  ['35.89112768 - 40.13865991', '#1a748d'],
  ['40.13865992 - 57.78225534', '#124d82'],
  ['57.78225535 - 97.31697845', '#0c2a78'],
];

const indents = ['pl-2', 'pl-[27px]', 'pl-[46px]', 'pl-[65px]'];

const TreeRow = ({ row }) => {
  const [checked, setChecked] = useState(true);
  if (row.symbol === 'point') {
    return <li className="h-5 flex items-center pl-[78px]"><span className="size-[9px] rounded-full border-2 border-black bg-[#128f96]" /></li>;
  }
  if (row.symbol) {
    return <li className="h-5 flex items-center pl-[97px] pt-0.5"><span className={clsx('w-[15px] h-[11px] border', row.symbol)} /></li>;
  }
  return (
    <li className={clsx('h-5 flex items-center', indents[row.level])}>
      <button aria-label="collapse" className="size-[9px] border border-[#9a9a9a] rounded-[1px] flex items-center justify-center bg-white">
        <span className="w-[5px] h-px bg-[#334f9c]" />
      </button>
      {row.icon && <Icon name={row.icon} className="size-4 ml-1.5 mr-1" />}
      {row.check ? (
        <label className="flex items-center">
          <span className="relative ml-2 mr-1.5 size-[11px]">
            <input type="checkbox" checked={checked} onChange={() => setChecked(!checked)} className="appearance-none block size-[11px] border border-black bg-white" />
            {checked && <svg viewBox="0 0 11 11" className="pointer-events-none absolute inset-0"><path d="M2.500 5l2 2.500 4-5" fill="none" stroke="#000" strokeWidth="1.800" /></svg>}
          </span>
          <span className={clsx('px-0.5 leading-5', row.selected && 'bg-[#0078d7] text-white')}>{row.text}</span>
        </label>
      ) : (
        <span className={clsx('leading-5', row.bold && 'font-bold')}>{row.text}</span>
      )}
    </li>
  );
};

const PanelHeader = ({ title }) => (
  <header className="h-[23px] shrink-0 flex items-center gap-2 pl-1 pr-[5px] bg-linear-to-r from-[#bfcddb] to-[#d9e5f2]">
    <h2 className="mr-auto">{title}</h2>
    <button aria-label="pin"><Pin /></button>
    <button aria-label="close"><CloseX /></button>
  </header>
);

const ContentsPanel = () => (
  <aside className="w-[264px] shrink-0 flex flex-col">
    <PanelHeader title="内容列表" />
    <div className="h-[25px] shrink-0 flex items-center pl-1 pb-0.5 bg-linear-to-b from-[#fafafa] to-[#efefef]">
      <ToolButton name="tocOrder" />
      <ToolButton name="tocSource" active="blue" />
      <ToolButton name="tocVis" />
      <ToolButton name="tocSel" />
      <Sep />
      <ToolButton name="list" />
    </div>
    <div className="flex-1 min-h-0 mr-px flex flex-col border border-[#828790] bg-white">
      <ul className="flex-1 min-h-0 overflow-hidden pt-px">
        {tree.map((row, i) => <TreeRow key={i} row={row} />)}
        <li className="h-5 pl-[103px] leading-5">&lt;值&gt;</li>
        {legend.map(([text, color]) => (
          <li key={text} className="h-5 flex items-center pl-[77px] gap-[3px] leading-5">
            <span className="w-4 h-3 border-2 border-[#6e6e6e] mt-0.5" style={{ backgroundColor: color }} />
            <span className="whitespace-nowrap">{text}</span>
          </li>
        ))}
      </ul>
      <div className="h-5 shrink-0 m-px flex items-start bg-[#f0f0f0]">
        <span className="w-[17px] h-4 flex items-center justify-center"><Chevron dir="left" /></span>
        <span className="w-[122px] h-[15px] bg-[#cdcdcd]" />
        <span className="ml-auto w-[17px] h-4 flex items-center justify-center"><Chevron dir="right" /></span>
      </div>
    </div>
  </aside>
);

// --- Attribute table window ---
const records = [
  [0, '点', '5栋3单元40'],
  [1, '点', '5栋1单元10'],
  [2, '点', '5栋1单元40'],
];

const TableWindow = () => (
  <section className="absolute left-[138px] top-[136px] w-[854px] h-[531px] flex flex-col bg-[#f0f0f0] border-t border-l border-[#e3e3e3] border-r-2 border-b-2 border-r-black border-b-black p-0.5">
    <header className="h-[22px] shrink-0 flex items-center pl-1 pr-1 gap-2 bg-linear-to-r from-[#c2d0de] to-[#d9e5f2]">
      <h2 className="mr-auto">表</h2>
      <span className="size-2 border border-black" />
      <button aria-label="close table"><CloseX /></button>
    </header>
    <div className="h-[27px] shrink-0 ml-0.5 flex items-center rounded-l bg-linear-to-b from-[#fdfdfd] to-[#f0f0f0]">
      <ToolButton name="list" caret /><Sep />
      <ToolButton name="related" caret /><Sep />
      <ToolButton name="selAttr" /><ToolButton name="selSwitch" /><ToolButton name="clearSel" /><ToolButton name="zoomSel" /><ToolButton name="del" />
    </div>
    <div className="h-[23px] shrink-0 flex items-center pl-1 pr-1 bg-linear-to-r from-[#c2d0de] to-[#d9e5f2]">
      <h3 className="mr-auto">观察点</h3>
      <button aria-label="close tab"><CloseX /></button>
    </div>
    <div className="flex-1 min-h-0 mr-1 border-t-4 border-l-4 border-double border-[#6a6a6a] border-r border-r-[#dcdcdc]">
      <table className={clsx('border-collapse text-[13px]', MONO_FONT)}>
        <thead>
          <tr className="h-[21px] bg-[#f0f0f0] leading-4">
            <th className="w-5 border border-[#6e6e6e] border-b-2 border-b-black" />
            <th className="w-[45px] border border-[#6e6e6e] border-b-2 border-b-black">FID</th>
            <th className="w-[81px] border border-[#6e6e6e] border-b-2 border-b-black">Shape *</th>
            <th className="w-[81px] border border-[#6e6e6e] border-b-2 border-b-black">房号</th>
            <th className="w-[81px] pl-[11px] text-left border border-[#6e6e6e] border-b-2 border-b-black">SPOT</th>
          </tr>
        </thead>
        <tbody>
          {records.map(([fid, shape, room]) => (
            <tr key={fid} className="h-[18px] bg-white leading-4">
              <td className="border border-[#6e6e6e] border-r-black border-b-black bg-[#f0f0f0]">
                {fid === 0 && <Icon name="rowMark" className="size-[7px] mx-auto" />}
              </td>
              <td className={clsx('pr-1.5 text-right border', fid === 0 ? 'border-black' : 'border-[#6e6e6e]')}>{fid}</td>
              <td className="pl-[3px] border border-[#6e6e6e]">{shape}</td>
              <td className="pl-1 whitespace-nowrap border border-[#6e6e6e]">{room}</td>
              <td className="border border-[#6e6e6e]" />
            </tr>
          ))}
        </tbody>
      </table>
    </div>
    <div className="h-[30px] shrink-0 mx-px flex items-center pl-[5px] border-y border-[#e0e0e0] bg-linear-to-b from-[#fafafa] to-[#f1f1f1]">
      <ToolButton name="first" /><ToolButton name="prev" />
      <input aria-label="record" defaultValue="1" className="w-14 h-[22px] mx-px px-1 bg-white text-right text-[14px]" />
      <ToolButton name="next" /><ToolButton name="last" /><Sep />
      <ToolButton name="allRecs" active="blue" /><ToolButton name="selRecs" /><Sep />
      <span className="pl-1">(0 / 3 已选择)</span>
    </div>
    <div className="h-[22px] shrink-0 pl-0.5">
      <button className="h-5 px-[5px] pt-px rounded-b border border-t-0 border-[#8a8a8a] bg-white">观察点</button>
    </div>
  </section>
);

const MapView = () => (
  <main className="flex-1 min-w-0 ml-1 mr-[5px] flex flex-col border-t-2 border-l-2 border-[#7c7c7c] border-r border-r-[#e3e3e3] bg-white relative">
    <div className="flex-1 min-h-0 flex">
      <div className="flex-1 bg-[#fdfefe] border-b border-r border-[#e0e0e0]" />
      <div className="w-5 flex flex-col bg-[#f0f0f0]">
        <span className="h-4 flex items-center justify-center"><Chevron dir="up" /></span>
        <span className="flex-1 w-[18px] bg-[#cdcdcd]" />
        <span className="h-[19px] w-[18px] flex items-center justify-center"><Chevron dir="down" /></span>
      </div>
    </div>
    <div className="h-[21px] shrink-0 flex items-start bg-[#f0f0f0]">
      <button aria-label="data view" className="w-[17px] h-[15px] flex items-center justify-center border border-[#90c8f0] bg-[#c0def5]"><Icon name="tabData" className="size-2.5" /></button>
      <button aria-label="layout view" className="w-[17px] h-[15px] flex items-center justify-center"><Icon name="tabLayout" className="size-2.5" /></button>
      <Sep />
      <button aria-label="refresh" className="w-[18px] h-[15px] flex items-center justify-center"><Icon name="refresh" className="size-2.5" /></button>
      <button aria-label="pause" className="w-[17px] h-[15px] flex items-center justify-center"><Icon name="pause" className="size-2.5" /></button>
      <span className="w-[17px] h-[18px] flex items-center justify-center"><Chevron dir="left" /></span>
      <span className="flex-1 h-[18px] bg-[#cdcdcd]" />
      <span className="w-[39px] h-[18px] pl-1 flex items-center"><Chevron dir="right" /></span>
    </div>
    <TableWindow />
    {/* Faded entry of the capture menu */}
    <div className="absolute left-[1022px] top-[300px] w-[200px] h-6 flex items-center bg-[#eff6fe] text-[15px] text-[#dcdcdc]">
      <span className="w-6 h-6 bg-[#e5f2fd] flex items-center justify-center"><span className="size-2 rounded-full bg-[#dedede]" /></span>
      <span className="pl-2.5">窗口截图(W)</span>
    </div>
  </main>
);

const CreatePanel = () => (
  <aside className="w-[270px] shrink-0 flex flex-col">
    <PanelHeader title="创建要素" />
    <div className="h-[27px] shrink-0 flex items-center pl-1 pb-0.5 bg-linear-to-b from-[#fafafa] to-[#f2f2f2]">
      <ToolButton name="filter" caret gray />
      <ToolButton name="organize" />
      <div className="relative flex-1 h-6 border border-[#a8a8a8] bg-[#f0f0f0]">
        <select aria-label="search templates" className="appearance-none w-full h-full pl-1 text-[14px] text-[#6d6d6d]"><option>&lt;搜索&gt;</option></select>
        <Caret gray className="pointer-events-none absolute right-[3px] top-2.5 w-[7px] h-1" />
      </div>
      <ToolButton name="searchGo" />
      <ToolButton name="searchClr" />
    </div>
    <div className="flex-1 min-h-0 border border-[#828790] bg-[#f0f0f0] pt-2.5 text-center text-[#6d6d6d]">没有可供显示的模板。</div>
    <div className="h-[15px] shrink-0 flex items-center justify-end gap-px bg-[#f4f4f4] relative">
      <span className="absolute left-[90px] w-[90px] h-px bg-[#a0a0a0]" />
      <button aria-label="collapse tools" className="size-[11px] border border-black flex items-center justify-center"><svg viewBox="0 0 8 8" className="size-[7px]"><path d="M1 1l3 2 3-2M1 4l3 3 3-3" fill="none" stroke="#000" strokeWidth="1.300" /></svg></button>
      <button aria-label="split tools" className="size-[11px] border border-black flex items-center justify-center"><span className="w-px h-[7px] bg-black" /></button>
    </div>
    <div className="h-[149px] shrink-0 border-t border-l border-[#a0a0a0] bg-[#f0f0f0] text-[#6d6d6d]">
      <h3 className="flex items-center gap-0.5 pt-1.5 font-medium text-[#555]"><Icon name="eCreate" />构造工具</h3>
      <p className="pt-3.5 text-center">选择模板。</p>
    </div>
  </aside>
);

const SideTab = ({ icon, text }) => (
  <button className="w-5 h-[52px] flex flex-col items-center gap-0.5 pt-1 rounded-l border border-r-0 border-[#8a8a8a] text-[#555] bg-[#f5f5f5]">
    <Icon name={icon} className="size-4" />
    <span className="[writing-mode:vertical-rl] [text-orientation:sideways] leading-4">{text}</span>
  </button>
);

// --- "Start editing" dialog ---
const editLayers = [
  { name: '观察点', source: 'dbEdit', type: 'ptLayer' },
  { name: '河流', source: 'db', type: 'polyLayer' },
  { name: '建筑', source: 'db', type: 'polyLayer' },
  { name: '游园', source: 'db', type: 'polyLayer' },
];

const sources = [
  { icon: 'dbEdit', format: 'Shapefile/dBase ', type: '文件' },
  { icon: 'db', type: '个人地理数据库' },
];

const StartEditDialog = () => {
  const [current, setCurrent] = useState('观察点');
  return (
    <section role="dialog" aria-label="开始编辑" className="absolute left-[684px] top-[214px] w-[553px] h-[601px] border border-[#6b6b6b] bg-[#f0f0f0] shadow-[0_4px_18px_rgba(0,0,0,0.4)]">
      <header className="h-[30px] pl-[3px] pr-3.5 flex items-center justify-between bg-white text-[15px]">
        <h2>开始编辑</h2>
        <button aria-label="关闭"><svg viewBox="0 0 14 14" className="size-[13px]"><path d="M1 1l12 12M13 1L1 13" stroke="#000" strokeWidth="1.200" /></svg></button>
      </header>
      <div className={clsx('px-3 text-[15px]', SONG_FONT)}>
        <p className="pt-3.5 leading-4">该地图包含多个数据库或文件夹的数据。<br />请选择要编辑的图层或工作空间。</p>
        <ul className="mt-[11px] h-[312px] border border-[#828790] bg-white pl-1.5">
          {editLayers.map((l) => (
            <li key={l.name}>
              <button onClick={() => setCurrent(l.name)} className="w-[490px] h-5 flex items-center text-left leading-5">
                <Icon name={l.source} className="size-3.5" />
                <Icon name={l.type} className="size-4 ml-1" />
                <span className={clsx('flex-1 pl-0.5', current === l.name && 'bg-[#0078d7] text-white')}>{l.name}</span>
              </button>
            </li>
          ))}
        </ul>
        <div className="mt-2 h-[136px] border border-[#828790] bg-white">
          <table className="table-fixed w-[496px]">
            <thead>
              <tr className="h-6 text-left">
                <th className="w-[297px] pl-2 font-normal border-r border-[#e5e5e5]">源</th>
                <th className="pl-1.5 font-normal border-r border-[#e5e5e5]">类型</th>
              </tr>
            </thead>
            <tbody>
              {sources.map((s) => (
                <tr key={s.icon} className="h-5 leading-5">
                  <td className="pl-1.5 pr-[7px]">
                    <span className={clsx('flex items-center gap-1.5 text-[13px]', UI_FONT)}>
                      <Icon name={s.icon} className="size-3.5" />E:\<span className="ml-auto">\chp07\...</span>
                    </span>
                  </td>
                  <td className="pl-1.5 whitespace-pre">
                    {s.format && <span className={clsx('text-xs', UI_FONT)}>{s.format}</span>}{s.type}
                  </td>
                </tr>
              ))}
            </tbody>
          </table>
        </div>
        <div className="pt-3.5 flex items-start">
          <a href="#about" className="mr-auto text-[#0000ff] underline leading-5">关于编辑和工作空间</a>
          <button className="w-[86px] h-[27px] border-2 border-[#0078d7] bg-[#e1e1e1] leading-5">确定</button>
          <button className="ml-3.5 w-[86px] h-[27px] border border-[#adadad] bg-[#e1e1e1] leading-5">取消</button>
        </div>
      </div>
    </section>
  );
};

const FloatingBird = () => (
  <svg viewBox="0 0 64 70" aria-hidden="true" className="absolute left-[1816px] top-[535px] w-16 h-[70px]">
    <defs>
      <linearGradient id="hex" x1="0" y1="0" x2="1" y2="1"><stop offset="0" stopColor="#2f76f6" /><stop offset="1" stopColor="#6a9dfb" /></linearGradient>
    </defs>
    <path d="M28 2q4-2 8 0l23 14q4 3 4 7v24q0 4-4 7L36 68q-4 2-8 0L5 54q-4-3-4-7V23q0-4 4-7z" fill="url(#hex)" stroke="#3b7df5" />
    <path d="M29 5q3-1 6 0l22 13q3 2 3 5v24q0 3-3 5L35 65q-3 1-6 0L7 52q-3-2-3-5V23q0-3 3-5z" fill="none" stroke="#a8c6fd" strokeWidth="1.300" />
    <path d="M32 4v31L5 52q-1-2-1-5V23q0-3 3-5z" fill="#2d72f5" opacity=".35" />
    <path d="M7 20c5 1 6 2 8 2 5-1 8 1 11 6 7-6 14-10 26-15-2 8-5 14-9 21l12 5c-7 2-12 2-18 4 2 5 4 11 6 18-5-8-10-11-17-15-8-5-10-11-8-20-2-3-6-4-11-6z" fill="#f1f6ff" />
  </svg>
);

export default function App() {
  return (
    <div className={clsx('relative h-screen overflow-hidden flex flex-col text-xs text-black bg-linear-to-r from-[#efefef] to-[#fcfcfc]', UI_FONT)}>
      <header className="h-[29px] shrink-0 flex items-center bg-white text-[#8c8c8c]">
        <Icon name="app" className="size-5 ml-0.5" />
        <h1 className="ml-[5px] mr-auto text-[15px]">观景点视域分析.mxd - ArcMap</h1>
        <button aria-label="minimize" className="w-[58px] flex justify-center"><span className="w-3 h-px bg-[#999]" /></button>
        <button aria-label="restore" className="w-[58px] flex justify-center">
          <svg viewBox="0 0 12 12" className="size-3"><path d="M.5 3.500h8v8h-8zM3 3V.5h8.500V9H9" fill="none" stroke="#999" /></svg>
        </button>
        <button aria-label="close window" className="w-[58px] mr-[3px] flex justify-center">
          <svg viewBox="0 0 12 12" className="size-3"><path d="M.5.5l11 11M11.500.5l-11 11" stroke="#999" /></svg>
        </button>
      </header>
      <nav className="h-7 shrink-0 flex items-center gap-[17px] pl-3">
        {menus.map((m) => <button key={m} className="whitespace-nowrap">{m}</button>)}
      </nav>

      <div className="h-[26px] shrink-0 flex">
        <Toolbar items={layoutTools} className="ml-[148px] w-96" />
        <Toolbar items={standardTools} grip="w-[9px]" className="w-[620px]" />
      </div>
      <div className="h-[26px] shrink-0 flex mt-px">
        <Toolbar items={navTools} className="ml-[3px] w-[525px]" />
      </div>
      <div className="h-[26px] shrink-0 flex">
        <Toolbar items={editorTools} grip="w-[9px]" className="ml-[175px] w-[436px]" />
        <Toolbar items={networkTools} grip="w-[9px]" className="ml-0.5 w-[485px]" />
        <Toolbar items={analystTools} grip="w-[9px]" className="ml-0.5 w-[511px]" />
      </div>
      <div className="h-[26px] shrink-0 flex mt-px">
        <Toolbar items={tinTools} grip="w-[9px]" className="ml-[1220px] w-[393px]" />
        <Toolbar items={[{ node: <SurfaceCombo label="surface" /> }, 'contour', 'hist']} className="ml-[9px] w-[244px]" />
      </div>

      <div className="flex-1 min-h-0 flex">
        <ContentsPanel />
        <MapView />
        <CreatePanel />
        <div className="w-[22px] shrink-0 pl-0.5 pt-0.5 flex flex-col">
          <SideTab icon="winCat" text="目录" />
          <SideTab icon="winSearch" text="搜索" />
        </div>
      </div>

      <footer className="relative h-[22px] shrink-0 flex items-center bg-[#f0f0f0] text-[13px]">
        <p className={clsx('absolute right-4 bottom-1.5 text-[20px] leading-[26px] text-[#8d8d8d]/90 [text-shadow:1px_1px_0_#fff]', SONG_FONT)}>CSDN @关于作业的二三事</p>
        <span className="relative ml-auto w-[282px] whitespace-pre">342.41  1170.265 米</span>
      </footer>

      <StartEditDialog />
      <FloatingBird />

      {/* Step marks */}
      <div className="pointer-events-none absolute left-[155px] top-[97px] w-[105px] h-[71px] border border-[#ee1c25]" />
      <div className="pointer-events-none absolute left-[704px] top-[297px] w-[510px] h-[27px] border border-[#ee1c25]" />
      <div className="pointer-events-none absolute left-[1033px] top-[755px] w-[91px] h-[59px] border border-[#ee1c25]" />
      <p className="absolute left-[269px] top-[151px] text-[23px] leading-[30px] text-[#4a50cc]">1.打开编辑器</p>
      <p className="absolute left-[935px] top-[341px] text-[23px] leading-[30px] text-[#4a50cc]">2.选择观察点</p>
      <p className="absolute left-[997px] top-[725px] text-[23px] leading-[30px] text-[#4a50cc]">3.点击确定</p>
    </div>
  );
}
